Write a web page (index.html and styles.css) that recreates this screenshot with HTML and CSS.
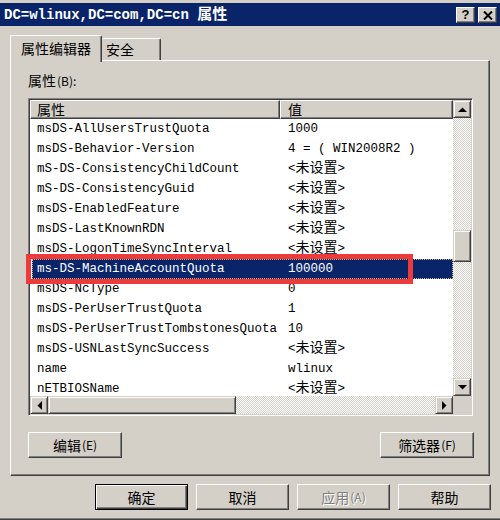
FILE: index.html
```html
<!DOCTYPE html>
<html>
<head>
<meta charset="utf-8">
<link rel="stylesheet" href="styles.css">
</head>
<body>
<div class="window">
  <div class="titlebar">
    <span class="title">DC=wlinux,DC=com,DC=cn <span class="cj">属性</span></span>
    <div class="caption-btns">
      <span class="cbtn q">?</span>
      <span class="cbtn"><svg width="10" height="9" viewBox="0 0 10 9"><path d="M1 0.5 L9 8.5 M9 0.5 L1 8.5" stroke="#000" stroke-width="2" fill="none"/></svg></span>
    </div>
  </div>
  <div class="tabs">
    <div class="tab active">属性编辑器</div>
    <div class="tab second">安全</div>
  </div>
  <div class="panel">
    <div class="label">属性<span class="acc">(B):</span></div>
    <div class="listbox">
      <div class="list">
        <div class="header"><div class="hcol h1">属性</div><div class="hcol h2">值</div></div>
        <div class="row"><span class="c1">msDS-AllUsersTrustQuota</span><span class="c2">1000</span></div>
        <div class="row"><span class="c1">msDS-Behavior-Version</span><span class="c2">4 = ( WIN2008R2 )</span></div>
        <div class="row"><span class="c1">mS-DS-ConsistencyChildCount</span><span class="c2">&lt;<span class="cj">未设置</span>&gt;</span></div>
        <div class="row"><span class="c1">mS-DS-ConsistencyGuid</span><span class="c2">&lt;<span class="cj">未设置</span>&gt;</span></div>
        <div class="row"><span class="c1">msDS-EnabledFeature</span><span class="c2">&lt;<span class="cj">未设置</span>&gt;</span></div>
        <div class="row"><span class="c1">msDS-LastKnownRDN</span><span class="c2">&lt;<span class="cj">未设置</span>&gt;</span></div>
        <div class="row"><span class="c1">msDS-LogonTimeSyncInterval</span><span class="c2">&lt;<span class="cj">未设置</span>&gt;</span></div>
        <div class="row selected"><span class="c1">ms-DS-MachineAccountQuota</span><span class="c2">100000</span></div>
        <div class="row"><span class="c1">msDS-NcType</span><span class="c2">0</span></div>
        <div class="row"><span class="c1">msDS-PerUserTrustQuota</span><span class="c2">1</span></div>
        <div class="row"><span class="c1">msDS-PerUserTrustTombstonesQuota</span><span class="c2">10</span></div>
        <div class="row"><span class="c1">msDS-USNLastSyncSuccess</span><span class="c2">&lt;<span class="cj">未设置</span>&gt;</span></div>
        <div class="row"><span class="c1">name</span><span class="c2">wlinux</span></div>
        <div class="row"><span class="c1">nETBIOSName</span><span class="c2">&lt;<span class="cj">未设置</span>&gt;</span></div>
      </div>
      <div class="vscroll">
        <div class="sbtn"><svg width="9" height="5" viewBox="0 0 9 5"><polygon points="0,5 9,5 4.5,0.5" fill="#000"/></svg></div>
        <div class="vtrack"><div class="vthumb"></div></div>
        <div class="sbtn"><svg width="9" height="5" viewBox="0 0 9 5"><polygon points="0,0 9,0 4.5,4.5" fill="#000"/></svg></div>
      </div>
      <div class="hscroll">
        <div class="sbtn"><svg width="5" height="9" viewBox="0 0 5 9"><polygon points="5,0 5,9 0.5,4.5" fill="#000"/></svg></div>
        <div class="hthumb"></div>
        <div class="htrack"></div>
        <div class="sbtn"><svg width="5" height="9" viewBox="0 0 5 9"><polygon points="0,0 0,9 4.5,4.5" fill="#000"/></svg></div>
      </div>
      <div class="corner"></div>
      <div class="highlight"></div>
    </div>
    <div class="panel-btns">
      <div class="btn">编辑<span class="acc">(E)</span></div>
      <div class="btn">筛选器<span class="acc">(F)</span></div>
    </div>
  </div>
  <div class="footer">
    <div class="btn default">确定</div>
    <div class="btn">取消</div>
    <div class="btn disabled">应用<span class="acc">(A)</span></div>
    <div class="btn">帮助</div>
  </div>
</div>
</body>
</html>
```

FILE: styles.css
```css
* { box-sizing: border-box; margin: 0; padding: 0; }
body {
  margin: 0;
  width: 500px;
  height: 520px;
  overflow: hidden;
  background: #d4d0c8;
  font-family: "Noto Sans CJK SC", sans-serif;
  font-size: 14px;
  color: #000;
}
.window {
  height: 520px;
  padding-top: 3px;
  box-shadow: inset 0 -1px #404040, inset 0 -2px #808080;
}
.titlebar {
  height: 23px;
  background: #0a246a;
  display: flex;
  align-items: center;
  justify-content: space-between;
  padding: 0 3px 0 4px;
}
.title {
  color: #fff;
  font: bold 14px "Liberation Mono", "Noto Sans CJK SC", monospace;
  white-space: pre;
  line-height: 18px;
}
.title .cj { font-family: "Noto Sans CJK SC", sans-serif; font-size: 15px; line-height: 1; }
.caption-btns { display: flex; gap: 3px; margin-top: 1px; }
.cbtn {
  width: 19px;
  height: 16px;
  background: #d4d0c8;
  border: 1px solid;
  border-color: #fff #404040 #404040 #fff;
  box-shadow: inset -1px -1px #808080;
  display: flex;
  align-items: center;
  justify-content: center;
}
.cbtn.q { font: bold 13px "Liberation Sans", sans-serif; line-height: 14px; }

.tabs {
  margin-top: 9px;
  height: 25px;
  padding-left: 10px;
  display: flex;
  align-items: flex-end;
  position: relative;
  z-index: 1;
}
.tab {
  height: 22px;
  border-top: 1px solid #fff;
  border-right: 1px solid #404040;
  box-shadow: inset -1px 0 #808080;
  border-radius: 2px 2px 0 0;
  line-height: 20px;
  font-size: 14px;
}
.tab.active {
  width: 92px;
  height: 27px;
  margin-bottom: -2px;
  border-left: 1px solid #fff;
  text-align: center;
  line-height: 22px;
  background: #d4d0c8;
  padding-top: 1px;
}
.tab.second { width: 59px; padding-left: 4px; }

.panel {
  margin-left: 10px;
  width: 480px;
  height: 416px;
  border: 1px solid;
  border-color: #fff #404040 #404040 #fff;
  box-shadow: inset -1px -1px #808080;
  padding: 11px 0 0 17px;
}
.label { height: 18px; line-height: 16px; margin-bottom: 8px; font-size: 14px; }
.acc { font-size: 12px; margin-left: 1px; }

.listbox {
  position: relative;
  width: 445px;
  height: 318px;
  border: 1px solid;
  border-color: #808080 #fff #fff #808080;
  box-shadow: inset 1px 1px #404040, inset -1px -1px #d4d0c8;
  padding: 1px;
  display: grid;
  grid-template-columns: 1fr 18px;
  grid-template-rows: 1fr 18px;
  background: #fff;
}
.list { overflow: hidden; background: #fff; }
.header { display: flex; height: 19px; }
.hcol {
  height: 19px;
  background: #d4d0c8;
  border: 1px solid;
  border-color: #fff #404040 #404040 #fff;
  box-shadow: inset -1px -1px #808080;
  font-size: 14px;
  line-height: 16px;
}
.h1 { width: 250px; padding-left: 6px; }
.h2 { flex: 1; padding-left: 7px; }
.row {
  display: flex;
  height: 20px;
  font: 12.5px/20px "Liberation Mono", "Noto Sans CJK SC", monospace;
  white-space: pre;
}
.row .c1 { width: 250px; padding-left: 7px; }
.row .c2 { flex: 1; padding-left: 8px; }
.row .cj {
  font-family: "Noto Sans CJK SC", sans-serif;
  font-size: 14px;
  line-height: 1;
}
.row.selected {
  background: #0a246a;
  color: #fff;
  margin-left: 2px;
  outline: 1px dotted #c9b98a;
  outline-offset: -1px;
}
.row.selected .c1 { width: 248px; padding-left: 5px; }

.sbtn {
  width: 18px;
  height: 18px;
  flex: none;
  background: #d4d0c8;
  border: 1px solid;
  border-color: #d4d0c8 #404040 #404040 #d4d0c8;
  box-shadow: inset 1px 1px #fff, inset -1px -1px #808080;
  display: flex;
  align-items: center;
  justify-content: center;
}
.vscroll { display: flex; flex-direction: column; }
.vtrack {
  flex: 1;
  background: repeating-conic-gradient(#d4d0c8 0 25%, #fff 0 50%) 0 0 / 2px 2px;
}
.vthumb {
  margin-top: 112px;
  height: 32px;
  background: #d4d0c8;
  border: 1px solid;
  border-color: #d4d0c8 #404040 #404040 #d4d0c8;
  box-shadow: inset 1px 1px #fff, inset -1px -1px #808080;
}
.hscroll { display: flex; }
.hthumb {
  width: 188px;
  background: #d4d0c8;
  border: 1px solid;
  border-color: #d4d0c8 #404040 #404040 #d4d0c8;
  box-shadow: inset 1px 1px #fff, inset -1px -1px #808080;
}
.htrack {
  flex: 1;
  background: repeating-conic-gradient(#d4d0c8 0 25%, #fff 0 50%) 0 0 / 2px 2px;
}
.corner { background: #d4d0c8; }
.highlight {
  position: absolute;
  left: -3px;
  top: 155px;
  width: 387px;
  height: 30px;
  border: 5px solid #ee3a3a;
}

.panel-btns {
  margin-top: 16px;
  width: 446px;
  display: flex;
  justify-content: space-between;
}
.btn {
  width: 94px;
  height: 26px;
  background: #d4d0c8;
  border: 1px solid;
  border-color: #fff #404040 #404040 #fff;
  box-shadow: inset -1px -1px #808080;
  display: flex;
  align-items: center;
  justify-content: center;
  font-size: 14px;
  line-height: 18px;
}
.footer {
  margin-top: 8px;
  display: flex;
  justify-content: flex-end;
  gap: 8px;
  padding-right: 9px;
}
.footer .btn { width: 93px; }
.btn.default {
  border: 1px solid #000;
  box-shadow: inset 1px 1px #fff, inset -1px -1px #404040, inset -2px -2px #808080;
}
.btn.disabled { color: #808080; text-shadow: 1px 1px #fff; }
```
